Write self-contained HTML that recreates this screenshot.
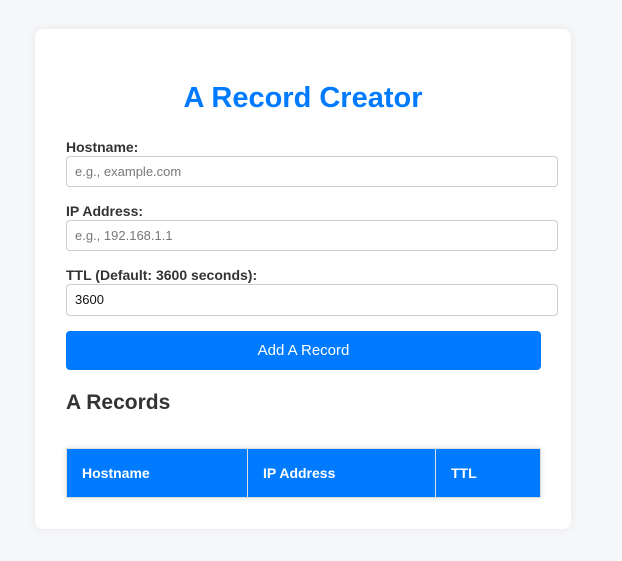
<!DOCTYPE html>
<html><head><style>
body{margin:0;background:#f6f7f9;font-family:"Liberation Sans",Arial,sans-serif;width:622px;height:561px;overflow:hidden;position:relative}
.card{position:absolute;left:35px;top:29px;width:536px;height:500px;background:#fff;border-radius:8px;box-shadow:0 0 10px rgba(0,0,0,0.06)}
h1{position:absolute;left:0;width:536px;top:51px;margin:0;text-align:center;color:#007bff;font-size:29px;font-weight:bold;line-height:36px}
.lbl{position:absolute;left:31px;font-size:14px;font-weight:bold;color:#333;line-height:16px}
.inp{position:absolute;left:31px;width:492px;border:1px solid #ccc;border-radius:4px;font-size:13px;line-height:29px;padding-left:8px;box-sizing:border-box;color:#777}
.btn{position:absolute;left:31px;top:302px;width:475px;height:39px;background:#007bff;border-radius:4px;color:#fff;font-size:15px;text-align:center;line-height:39px}
h2{position:absolute;left:31px;top:361px;margin:0;font-size:21px;font-weight:bold;color:#333;line-height:26px}
table{position:absolute;left:31px;top:419px;width:475px;border-collapse:collapse;box-shadow:0 0 6px rgba(0,0,0,0.12)}
th{background:#007bff;color:#fff;font-size:14px;text-align:left;height:48px;padding:0 0 0 15px;border:1px solid #ddd}
</style></head><body>
<div class="card">
<h1>A Record Creator</h1>
<div class="lbl" style="top:110px">Hostname:</div>
<div class="inp" style="top:127px;height:31px">e.g., example.com</div>
<div class="lbl" style="top:174px">IP Address:</div>
<div class="inp" style="top:191px;height:31px">e.g., 192.168.1.1</div>
<div class="lbl" style="top:238px">TTL (Default: 3600 seconds):</div>
<div class="inp" style="top:255px;height:32px;color:#111;line-height:30px">3600</div>
<div class="btn">Add A Record</div>
<h2>A Records</h2>
<table><tr><th style="width:165px">Hostname</th><th style="width:172px">IP Address</th><th>TTL</th></tr></table>
</div>
</body></html>
